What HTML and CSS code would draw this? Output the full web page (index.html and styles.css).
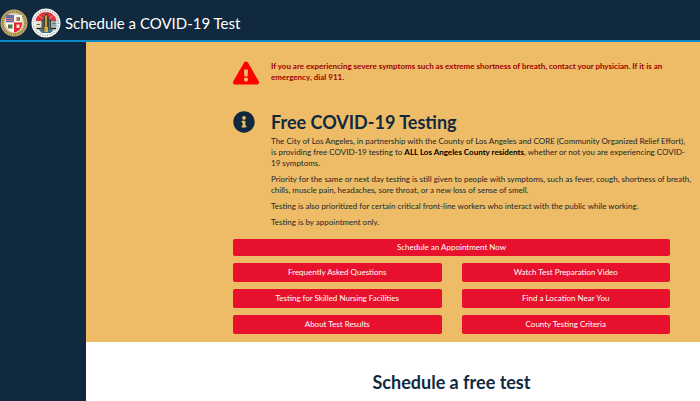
FILE: index.html
```
<!DOCTYPE html>
<html lang="en">
<head>
  <meta charset="UTF-8">
  <meta name="viewport" content="width=device-width, initial-scale=1">
  <title>Schedule a COVID-19 Test</title>
  <link rel="stylesheet" href="styles.css">
</head>
<body>

<header class="topbar">
  <!-- City seal -->
  <svg class="seal-city" viewBox="0 0 56 56" role="img" aria-label="City of Los Angeles seal">
    <circle cx="28" cy="28" r="27" fill="#c9b169"/>
    <circle cx="28" cy="28" r="23" fill="none" stroke="#85764c" stroke-width="4" stroke-dasharray="2 2"/>
    <circle cx="28" cy="28" r="20" fill="#d8d2b8"/>
    <path d="M12 12h16v15H12z" fill="#5d6eaa"/>
    <path d="M12 19h16M12 23h16" stroke="#e0707b" stroke-width="2"/>
    <path d="M28 12h16v15H28z" fill="#f8f6f0"/>
    <path d="M33 16h7v8h-7z" fill="#9a7a4a"/>
    <path d="M12 27h16v20c-10-2-16-9-16-20z" fill="#fbfaf5"/>
    <path d="M16 31h9v8h-9z" fill="#4c7c42"/>
    <path d="M28 27h16c0 11-6 18-16 20z" fill="#e3232d"/>
    <path d="M33 31h6v7h-6z" fill="#f6e5c4"/>
  </svg>
  <!-- County seal -->
  <svg class="seal-county" viewBox="0 0 60 60" role="img" aria-label="County of Los Angeles seal">
    <circle cx="30" cy="30" r="29" fill="#f8f7f3"/>
    <circle cx="30" cy="30" r="25" fill="none" stroke="#999" stroke-width="3" stroke-dasharray="2 3"/>
    <circle cx="30" cy="30" r="22" fill="#f6f3ea"/>
    <path d="M11 19a22 22 0 0 1 38 0l2 7H9z" fill="#e2323c"/>
    <path d="M30 26L14 14M30 26l16-12M30 26V8" stroke="#f6d9c4" stroke-width="1"/>
    <path d="M9 26h12v13H10z" fill="#e6e2d5"/>
    <path d="M40 26h11v13H40z" fill="#8bb5bd"/>
    <path d="M11 33h7M43 31h6" stroke="#666" stroke-width="2"/>
    <path d="M21 23h4v-6h3v-6h5v6h3v6h4v23H21z" fill="#3d4439"/>
    <path d="M24 26v16M37 26v16" stroke="#77744f" stroke-width="2"/>
    <path d="M30 15v28" stroke="#c79b3b" stroke-width="4"/>
    <path d="M15 43h31l-7 7H22z" fill="#3a7891"/>
    <path d="M27 38h7v10h-7z" fill="#e0ad3d"/>
    <path d="M11 41h10M40 41h10" stroke="#222" stroke-width="3"/>
  </svg>
  <h1 class="site-title">Schedule a COVID-19 Test</h1>
</header>

<div class="layout">
  <aside class="sidebar"></aside>

  <main>
    <section class="info">
      <div class="notice">
        <svg class="icon icon-warning" viewBox="0 0 576 512" aria-hidden="true">
          <path fill="currentColor" d="M569.5 440c18.500 32-4.700 72-41.600 72H48.100c-36.900 0-60-40.100-41.600-72L246.400 24c18.500-32 64.700-32 83.200 0l239.900 416zM288 354c-25.400 0-46 20.600-46 46s20.600 46 46 46 46-20.600 46-46-20.600-46-46-46zm-43.700-165.300l7.400 136c.3 6.400 5.600 11.300 12 11.300h48.500c6.400 0 11.600-5 12-11.300l7.400-136c.4-6.900-5.100-12.700-12-12.700h-63.400c-6.900 0-12.300 5.800-11.900 12.700z"/>
        </svg>
        <p class="alert">If you are experiencing severe symptoms such as extreme shortness of breath, contact your physician. If it is an emergency, dial 911.</p>
      </div>

      <div class="notice">
        <svg class="icon icon-info" viewBox="0 0 512 512" aria-hidden="true">
          <path fill="currentColor" d="M256 8C119 8 8 119 8 256s111 248 248 248 248-111 248-248S393 8 256 8zm0 110c23.200 0 42 18.800 42 42s-18.800 42-42 42-42-18.800-42-42 18.800-42 42-42zm56 254c0 6.600-5.400 12-12 12h-88c-6.600 0-12-5.400-12-12v-24c0-6.600 5.400-12 12-12h12v-64h-12c-6.600 0-12-5.400-12-12v-24c0-6.600 5.400-12 12-12h64c6.600 0 12 5.400 12 12v100h12c6.600 0 12 5.400 12 12v24z"/>
        </svg>
        <div class="notice-body">
          <h2>Free COVID-19 Testing</h2>
          <p>The City of Los Angeles, in partnership with the County of Los Angeles and CORE (Community Organized Relief Effort), is providing free COVID-19 testing to <strong>ALL Los Angeles County residents</strong>, whether or not you are experiencing COVID-19 symptoms.</p>
          <p>Priority for the same or next day testing is still given to people with symptoms, such as fever, cough, shortness of breath, chills, muscle pain, headaches, sore throat, or a new loss of sense of smell.</p>
          <p>Testing is also prioritized for certain critical front-line workers who interact with the public while working.</p>
          <p>Testing is by appointment only.</p>
        </div>
      </div>

      <nav class="actions">
        <a class="btn btn-wide" href="#schedule">Schedule an Appointment Now</a>
        <a class="btn" href="#faq">Frequently Asked Questions</a>
        <a class="btn" href="#video">Watch Test Preparation Video</a>
        <a class="btn" href="#nursing">Testing for Skilled Nursing Facilities</a>
        <a class="btn" href="#locations">Find a Location Near You</a>
        <a class="btn" href="#results">About Test Results</a>
        <a class="btn" href="#criteria">County Testing Criteria</a>
      </nav>
    </section>

    <section class="schedule" id="schedule">
      <h2>Schedule a free test</h2>
    </section>
  </main>
</div>

</body>
</html>
```
FILE: styles.css
```
* {
  box-sizing: border-box;
}
body {
  margin: 0;
  min-height: 100vh;
  display: flex;
  flex-direction: column;
  font-family: Lato, "Liberation Sans", sans-serif;
  font-size: 8px;
  line-height: 11px;
  color: #212529;
  background: #fff;
}
h1, h2, p {
  margin: 0;
}
.topbar {
  display: flex;
  align-items: center;
  padding: 8px 0 2px;
  background: #10293f;
  border-bottom: 2px solid #0b88c8;
}
.seal-city {
  width: 28px;
  height: 28px;
}
.seal-county {
  width: 30px;
  height: 30px;
  margin: 0 4px 0 3px;
}
.site-title {
  font-size: 15px;
  line-height: 20px;
  font-weight: 400;
  color: #fff;
}
.layout {
  flex: 1;
  display: flex;
}
.sidebar {
  flex: 0 0 86px;
  background: #10293f;
}
main {
  flex: 1;
}
.info {
  padding: 19px 8px 8px 147px;
  background: #eebc67;
}
.notice {
  display: flex;
  align-items: flex-start;
  gap: 12px;
}
.notice + .notice {
  margin-top: 25px;
}
.icon {
  flex: 0 0 26px;
  height: 24px;
}
.icon-warning {
  color: #f00;
}
.icon-info {
  flex-basis: 22px;
  margin-right: 4px;
  color: #10293f;
}
.alert {
  padding-right: 22px;
  font-weight: 700;
  color: #a00000;
}
.notice-body h2 {
  margin-bottom: 2px;
}
.notice-body p {
  margin-bottom: 5px;
}
.notice-body strong {
  font-weight: 700;
  color: #000;
}
h2 {
  font-size: 18px;
  line-height: 24px;
  font-weight: 700;
  color: #10293f;
}
.actions {
  display: grid;
  grid-template-columns: 1fr 1fr;
  gap: 7px 20px;
  margin: 6px 22px 0 0;
}
.btn {
  padding: 4px;
  border-radius: 2px;
  background: #e8112d;
  color: #fff;
  text-align: center;
  text-decoration: none;
}
.btn-wide {
  grid-column: 1 / -1;
  padding: 3px;
}
.schedule {
  padding: 28px 30px 8px 147px;
  text-align: center;
}
```
